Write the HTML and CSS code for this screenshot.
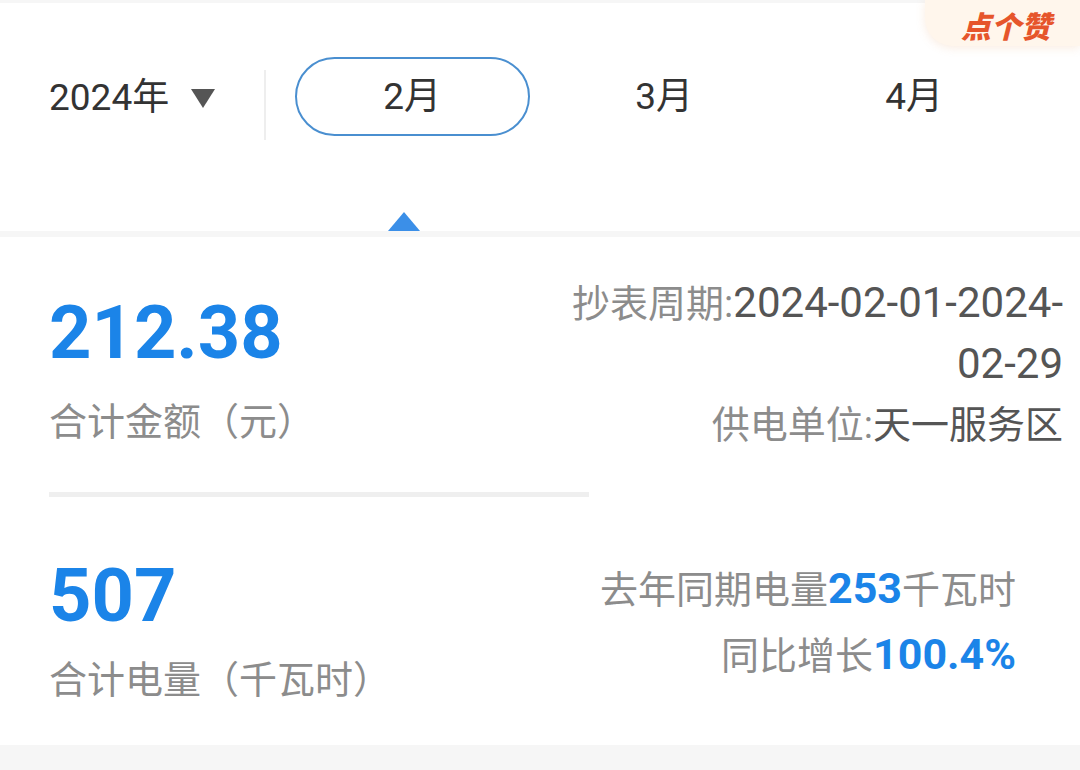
FILE: index.html
```html
<!DOCTYPE html>
<html lang="zh-CN">
<head>
    <meta charset="UTF-8">
    <meta name="viewport" content="width=device-width, initial-scale=1.0">
    <title>电费账单</title>
    <link rel="stylesheet" href="styles.css">
</head>
<body>
    <div class="page">
        <div class="month-bar">
            <div class="year-picker">2024年<span class="caret"></span></div>
            <div class="bar-divider"></div>
            <ul class="months">
                <li class="active"><span>2月</span></li>
                <li><span>3月</span></li>
                <li><span>4月</span></li>
            </ul>
            <span class="pointer"></span>
        </div>
        <a class="like-badge" href="#">点个赞</a>

        <div class="summary">
            <div class="summary-row row-amount">
                <div class="stat">
                    <div class="stat-num">212.38</div>
                    <div class="stat-label">合计金额（元）</div>
                </div>
                <div class="meta meta-top">
                    <p><span class="key">抄表周期:</span><span class="val digits">2024-02-01-2024-<br>02-29</span></p>
                    <p><span class="key">供电单位:</span><span class="val">天一服务区</span></p>
                </div>
            </div>
            <div class="summary-rule"></div>
            <div class="summary-row row-power">
                <div class="stat">
                    <div class="stat-num">507</div>
                    <div class="stat-label">合计电量（千瓦时）</div>
                </div>
                <div class="meta meta-bottom">
                    <p>去年同期电量<b>253</b>千瓦时</p>
                    <p>同比增长<b>100.4%</b></p>
                </div>
            </div>
        </div>
        <div class="page-foot"></div>
    </div>
</body>
</html>
```

FILE: styles.css
```css
body {
    margin: 0;
    padding: 0;
    background-color: #f6f6f6;
    font-family: Roboto, "Noto Sans CJK SC", sans-serif;
}
.page {
    position: relative;
    width: 1080px;
    height: 770px;
    overflow: hidden;
    padding-top: 3px;
    box-sizing: border-box;
}
.month-bar {
    position: relative;
    display: flex;
    align-items: flex-start;
    height: 228px;
    padding: 0 0 0 49px;
    background-color: #fff;
    box-sizing: border-box;
}
.year-picker {
    display: flex;
    align-items: center;
    margin-top: 72px;
    font-size: 37px;
    color: #333;
    line-height: 46px;
}
.caret {
    width: 0;
    height: 0;
    margin-left: 22px;
    border-left: 12px solid transparent;
    border-right: 12px solid transparent;
    border-top: 19px solid #555;
}
.bar-divider {
    width: 2px;
    height: 70px;
    margin: 67px 21px 0 49px;
    background-color: #eeeeee;
}
.months {
    display: flex;
    margin: 54px 0 0 0;
    padding: 0;
    list-style: none;
}
.months li {
    width: 250px;
    height: 79px;
    display: flex;
    align-items: center;
    justify-content: center;
    font-size: 37px;
    color: #333;
}
.months li span {
    display: flex;
    align-items: center;
    justify-content: center;
    padding-bottom: 8px;
    box-sizing: border-box;
}
.months li:not(.active) span {
    margin-left: 4px;
}
.months li.active span {
    width: 235px;
    height: 79px;
    border: 2.5px solid #4a8fd0;
    border-radius: 40px;
}
.pointer {
    position: absolute;
    left: 388px;
    bottom: 0;
    width: 0;
    height: 0;
    border-left: 16px solid transparent;
    border-right: 16px solid transparent;
    border-bottom: 19px solid #3b8fe8;
}
.like-badge {
    position: absolute;
    top: 0;
    right: 0;
    width: 155px;
    height: 46px;
    padding: 3px 0 0 36px;
    box-sizing: border-box;
    background-color: #fff6ec;
    border-bottom-left-radius: 28px;
    box-shadow: 0 2px 10px rgba(230, 150, 90, 0.18);
    color: #e6552b;
    font-size: 30px;
    font-weight: 900;
    font-style: italic;
    font-family: "Noto Sans CJK SC", sans-serif;
    text-decoration: none;
}
.summary {
    margin-top: 6px;
    height: 508px;
    padding: 0 17px 0 49px;
    background-color: #fff;
}
.summary-row {
    display: flex;
    justify-content: space-between;
}
.stat-num {
    font-size: 74px;
    font-weight: 700;
    line-height: 76px;
    color: #1b84e8;
}
.stat-label {
    margin-top: 22px;
    font-size: 38px;
    line-height: 52px;
    color: #8c8c8c;
    font-family: "Noto Sans CJK SC", sans-serif;
}
.row-amount .stat {
    padding-top: 58px;
}
.row-power .stat {
    padding-top: 61px;
}
.row-power .stat-label {
    margin-top: 17px;
}
.meta {
    text-align: right;
    font-size: 38px;
    line-height: 60px;
    color: #8c8c8c;
}
.meta p {
    margin: 0;
}
.meta-top {
    padding-top: 36px;
}
.meta .val {
    color: #555;
}
.meta .digits {
    font-size: 42px;
}
.meta-bottom {
    padding: 59px 47px 0 0;
    line-height: 64px;
}
.meta b {
    color: #1b84e8;
    font-size: 43px;
    font-weight: 700;
}
.summary-rule {
    width: 540px;
    height: 5px;
    margin-top: 37px;
    background-color: #efefef;
}
```
